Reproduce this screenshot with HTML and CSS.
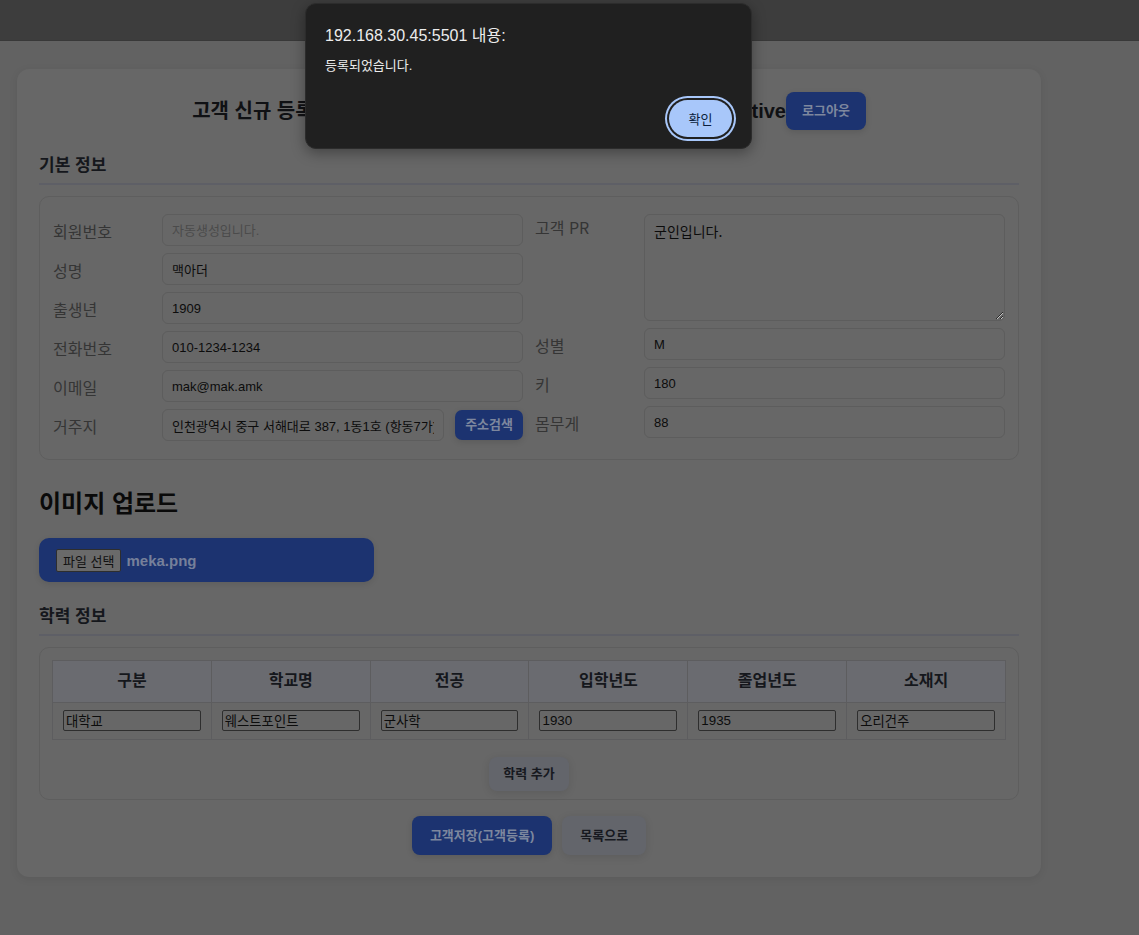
FILE: index.html
```html
<!DOCTYPE html>
<html lang="ko">
<head>
<meta charset="utf-8">
<title>고객 신규 등록</title>
<link rel="stylesheet" href="styles.css">
</head>
<body>
<div class="topbar"></div>
<main class="card">
  <header class="page-head">
    <h1 class="page-title">고객 신규 등록 - 관리자 홍길동 (admin@example.com) 상태: Active</h1>
    <button class="btn btn-blue btn-logout">로그아웃</button>
  </header>

  <h3 class="section-title">기본 정보</h3>
  <section class="box basic">
    <div class="col">
      <div class="row"><label class="lbl">회원번호</label><input class="field" placeholder="자동생성입니다."></div>
      <div class="row"><label class="lbl">성명</label><input class="field" value="맥아더"></div>
      <div class="row"><label class="lbl">출생년</label><input class="field" value="1909"></div>
      <div class="row"><label class="lbl">전화번호</label><input class="field" value="010-1234-1234"></div>
      <div class="row"><label class="lbl">이메일</label><input class="field" value="mak@mak.amk"></div>
      <div class="row"><label class="lbl">거주지</label><input class="field" value="인천광역시 중구 서해대로 387, 1동1호 (항동7가)"><button class="btn btn-blue btn-sm">주소검색</button></div>
    </div>
    <div class="col">
      <div class="row row-top"><label class="lbl">고객 PR</label><textarea class="field area">군인입니다.</textarea></div>
      <div class="row"><label class="lbl">성별</label><input class="field" value="M"></div>
      <div class="row"><label class="lbl">키</label><input class="field" value="180"></div>
      <div class="row"><label class="lbl">몸무게</label><input class="field" value="88"></div>
    </div>
  </section>

  <h2 class="upload-title">이미지 업로드</h2>
  <div class="upload">
    <span class="file-btn">파일 선택</span>
    <span class="file-name">meka.png</span>
  </div>

  <h3 class="section-title edu-title">학력 정보</h3>
  <section class="box edu">
    <table class="edu-table">
      <thead>
        <tr><th>구분</th><th>학교명</th><th>전공</th><th>입학년도</th><th>졸업년도</th><th>소재지</th></tr>
      </thead>
      <tbody>
        <tr>
          <td><input class="cell-input" value="대학교"></td>
          <td><input class="cell-input" value="웨스트포인트"></td>
          <td><input class="cell-input" value="군사학"></td>
          <td><input class="cell-input" value="1930"></td>
          <td><input class="cell-input" value="1935"></td>
          <td><input class="cell-input" value="오리건주"></td>
        </tr>
      </tbody>
    </table>
    <div class="center"><button class="btn btn-light">학력 추가</button></div>
  </section>

  <div class="actions">
    <button class="btn btn-blue btn-lg">고객저장(고객등록)</button>
    <button class="btn btn-light btn-lg">목록으로</button>
  </div>
</main>

<div class="alert">
  <div class="alert-title">192.168.30.45:5501 내용:</div>
  <div class="alert-msg">등록되었습니다.</div>
  <div class="alert-actions"><button class="alert-ok">확인</button></div>
</div>
</body>
</html>
```

FILE: styles.css
```css
html, body {
  margin: 0;
  padding: 0;
}
body {
  background: #626262;
  font-family: "Liberation Sans", "Noto Sans CJK KR", sans-serif;
  color: #111;
  min-height: 935px;
  position: relative;
}
.topbar {
  height: 40px;
  background: #3d3d3d;
  border-bottom: 1px solid #383838;
}
.card {
  width: 1024px;
  box-sizing: border-box;
  margin: 28px 0 0 17px;
  background: #676767;
  border-radius: 12px;
  padding: 22px 22px 22px;
  box-shadow: 0 2px 8px rgba(0,0,0,0.08);
}
.page-head {
  display: flex;
  justify-content: center;
  align-items: center;
  height: 40px;
}
.page-title {
  margin: 0;
  font-size: 20px;
  font-weight: 700;
  color: #101114;
  line-height: 24px;
  white-space: nowrap;
}
.btn {
  font-family: "Liberation Sans", "Noto Sans CJK KR", sans-serif;
  font-weight: 700;
  font-size: 13px;
  border: none;
  border-radius: 8px;
  cursor: pointer;
  line-height: 18px;
}
.btn-blue {
  background: #1c3370;
  color: #7d879e;
  padding: 10px 14px;
  box-shadow: 0 2px 6px rgba(0,0,0,0.12);
}
.btn-logout {
  padding: 10px 16px;
}
.btn-light {
  background: #63656b;
  color: #17191f;
  padding: 8px 14px;
  box-shadow: 0 2px 8px rgba(0,0,0,0.1);
}
.btn-sm {
  padding: 6px 10px;
  margin-left: 11px;
  flex: none;
  border-radius: 7px;
}
.btn-lg {
  padding: 10px 18px;
  height: 39px;
}
.section-title {
  margin: 25px 0 0;
  font-size: 17px;
  font-weight: 700;
  line-height: 20px;
  color: #15171c;
  padding-bottom: 7px;
  border-bottom: 2px solid #5e5f66;
}
.box {
  margin-top: 11px;
  border: 1px solid #5e5e5e;
  border-radius: 10px;
}
.basic {
  display: flex;
  gap: 12px;
  padding: 17px 13px 18px;
}
.col {
  flex: 1;
  display: flex;
  flex-direction: column;
  gap: 7px;
}
.row {
  display: flex;
  align-items: center;
}
.row-top {
  align-items: flex-start;
}
.lbl {
  width: 109px;
  flex: none;
  font-size: 16px;
  line-height: 20px;
  color: #353535;
  font-family: "Noto Sans CJK KR", "Liberation Sans", sans-serif;
  padding-top: 2px;
}
.row-top .lbl {
  margin-top: 1px;
}
.field {
  flex: 1;
  min-width: 0;
  height: 32px;
  box-sizing: border-box;
  border: 1px solid #5d5d5d;
  border-radius: 6px;
  background: #676767;
  padding: 0 9px;
  font-family: "Liberation Sans", "Noto Sans CJK KR", sans-serif;
  font-size: 13px;
  color: #0c0c0c;
  outline: none;
}
.field::placeholder {
  color: #4b4b4b;
}
.area {
  height: 107px;
  padding: 6px 9px;
  resize: vertical;
  font-size: 14px;
  line-height: 20px;
  font-family: "Noto Sans CJK KR", monospace;
}
.upload-title {
  margin: 27px 0 0;
  font-size: 24px;
  line-height: 30px;
  font-weight: 700;
  color: #0a0a0a;
  font-family: "Noto Sans CJK KR", "Liberation Sans", sans-serif;
}
.upload {
  margin-top: 21px;
  width: 335px;
  height: 44px;
  box-sizing: border-box;
  background: #1c3370;
  border-radius: 10px;
  display: flex;
  align-items: center;
  padding: 0 17px;
  gap: 5px;
  box-shadow: 0 2px 6px rgba(0,0,0,0.1);
}
.file-btn {
  font-family: "Noto Sans CJK KR", sans-serif;
  font-size: 13px;
  line-height: 21px;
  background: #6a6a6a;
  color: #111;
  border: 1px solid #2e2e2e;
  border-radius: 2px;
  padding: 0 6px;
}
.file-name {
  font-size: 15px;
  font-weight: 700;
  color: #76809a;
}
.edu-title {
  margin-top: 25px;
}
.edu {
  padding: 12px 12px 8px;
}
.edu-table {
  width: 100%;
  border-collapse: collapse;
  table-layout: fixed;
}
.edu-table th {
  background: #6a6b70;
  font-size: 16px;
  font-weight: 700;
  line-height: 20px;
  color: #15171c;
  padding: 10px 0 11px;
  border: 1px solid #5d5d5f;
}
.edu-table td {
  border: 1px solid #5d5d5f;
  padding: 7px 10px 8px;
}
.cell-input {
  width: 100%;
  height: 21px;
  box-sizing: border-box;
  border: 1px solid #2e2e2e;
  border-radius: 2px;
  background: #676767;
  font-family: "Liberation Sans", "Noto Sans CJK KR", sans-serif;
  font-size: 13.33px;
  color: #0c0c0c;
  padding: 1px 2px;
  outline: none;
}
.center {
  display: flex;
  justify-content: center;
  margin-top: 17px;
}
.center .btn-light {
  height: 34px;
}
.actions {
  display: flex;
  justify-content: center;
  gap: 10px;
  margin-top: 16px;
}
.alert {
  position: absolute;
  top: 3px;
  left: 305px;
  width: 447px;
  height: 146px;
  box-sizing: border-box;
  background: #202020;
  border-radius: 11px;
  border: 1px solid #2c2c2c;
  box-shadow: 0 4px 14px rgba(0,0,0,0.35);
  padding: 22px 16px 0 19px;
  color: #ececec;
  font-family: "Liberation Sans", "Noto Sans CJK KR", sans-serif;
}
.alert-title {
  font-size: 16px;
  line-height: 20px;
}
.alert-msg {
  font-size: 13px;
  line-height: 18px;
  margin-top: 11px;
}
.alert-actions {
  display: flex;
  justify-content: flex-end;
  margin-top: 25px;
}
.alert-ok {
  width: 63px;
  height: 37px;
  border-radius: 19px;
  border: none;
  background: #a8c7fa;
  color: #0a1d3b;
  font-family: "Noto Sans CJK KR", sans-serif;
  font-size: 13px;
  box-shadow: 0 0 0 2px #202020, 0 0 0 4px #a8c7fa;
  margin-right: 3px;
}
```
